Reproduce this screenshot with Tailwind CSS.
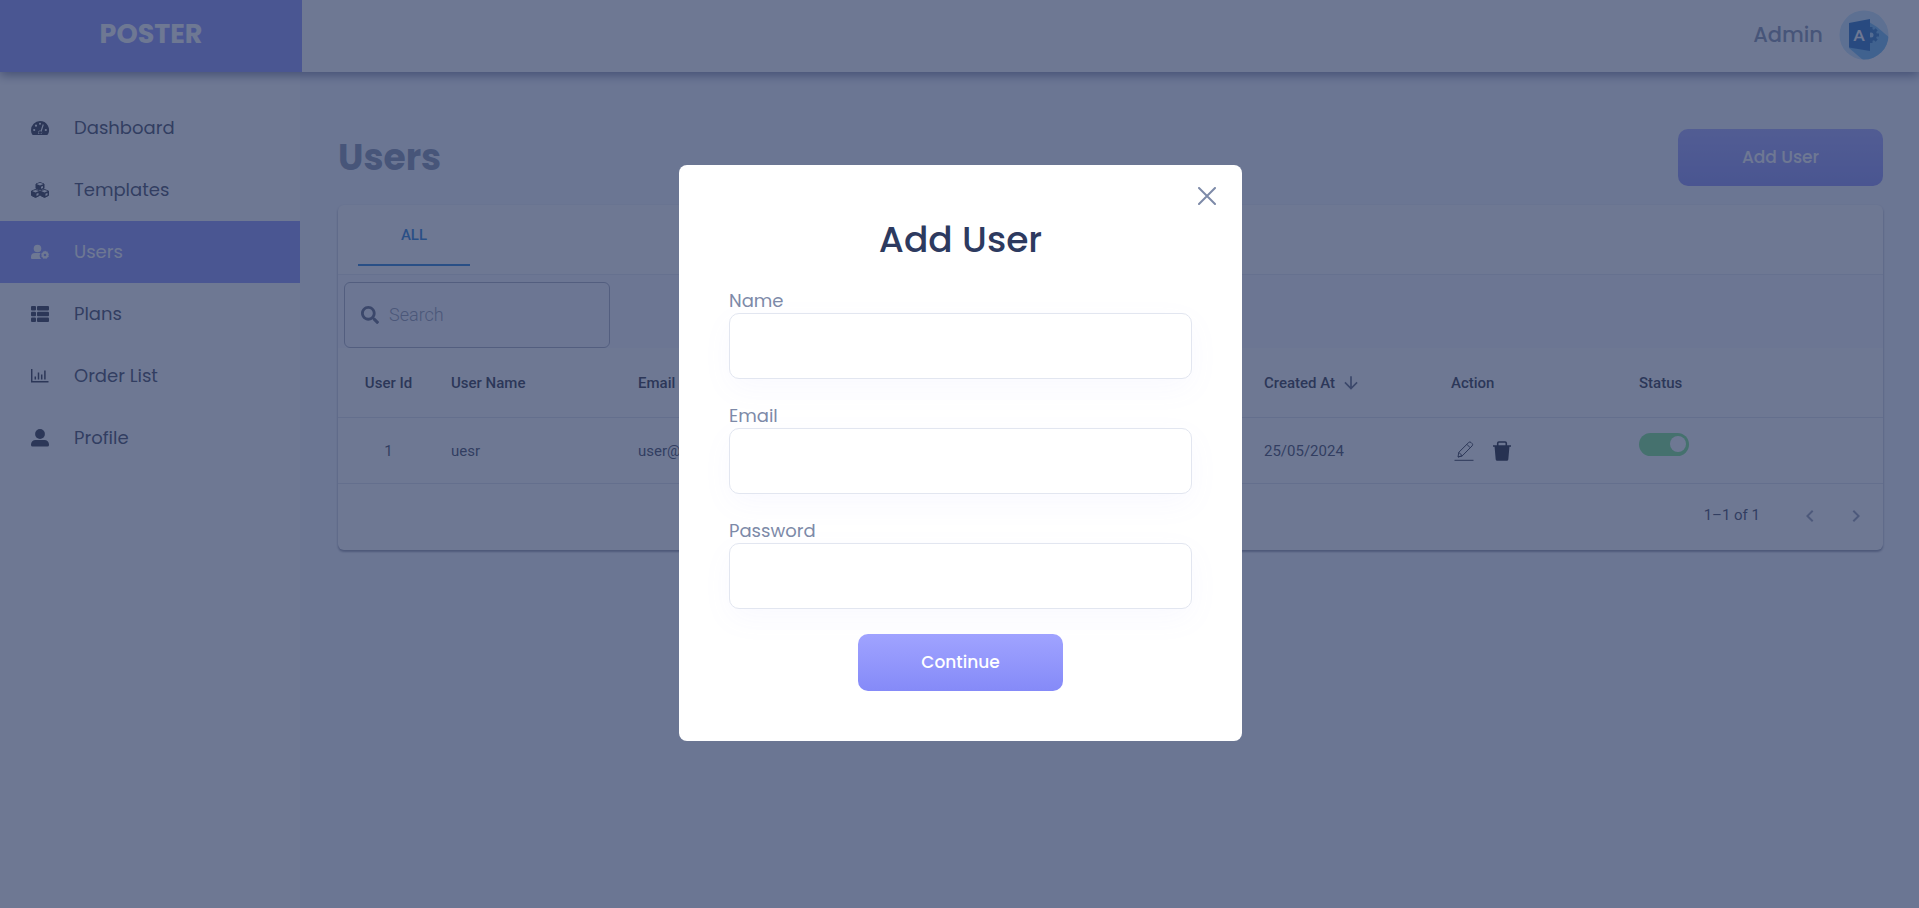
<!DOCTYPE html>
<html lang="en">
<head>
    <meta charset="UTF-8" />
    <meta name="viewport" content="width=device-width, initial-scale=1.0" />
    <title>Poster Admin</title>
    <script src="https://cdn.jsdelivr.net/npm/@tailwindcss/browser@4"></script>
</head>
<body class="min-h-screen bg-[#f5f8ff] font-[Poppins,Inter,sans-serif] text-[#7d8aa8]">
    <div class="flex min-h-screen flex-col">
        <!-- Top bar -->
        <header class="relative flex h-18 bg-white shadow-[0_3px_10px_rgba(20,28,80,0.6)]">
            <div class="flex w-[302px] items-center justify-center bg-[#858cfa] pb-1 text-[27px] font-bold text-white">POSTER</div>
            <div class="flex flex-1 items-center justify-end gap-4 pr-[30px] pb-[2px]">
                <span class="text-[21px] font-medium">Admin</span>
                <svg class="size-[50px]" viewBox="0 0 50 50">
                    <defs><clipPath id="round"><circle cx="25" cy="25" r="24.5" /></clipPath></defs>
                    <g clip-path="url(#round)">
                        <rect width="50" height="50" fill="#c5e4fb" />
                        <path d="M10 38 30 12 38 17 52 29V50H24Z" fill="#64b5f0" />
                        <g fill="#1f6fc0">
                            <circle cx="32" cy="25" r="6" />
                            <path d="M30.500 17h3v16h-3zM24 23.500h16v3H24zM36.600 18.300l2.100 2.100-11.300 11.300-2.100-2.100zM38.700 29.600l-2.100 2.100-11.300-11.300 2.100-2.100z" />
                        </g>
                        <circle cx="32" cy="25" r="2.500" fill="#a9d8fa" />
                        <path d="M10 13 31 9v32L10 37.500Z" fill="#1565c0" />
                        <text x="20" y="31" text-anchor="middle" font-family="Lato, sans-serif" font-size="16" font-weight="700" fill="#fff">A</text>
                    </g>
                </svg>
            </div>
        </header>

        <div class="flex flex-1">
            <!-- Sidebar -->
            <aside class="w-[300px] shrink-0 bg-white pt-[25px] text-lg text-[#363c58]">
                <nav>
                    <a href="#" class="flex h-[62px] items-center gap-[25px] pl-[31px]">
                        <svg class="size-[18px]" viewBox="0 0 18 18">
                            <path d="M9 2a9 9 0 0 0-9 9c0 1.700.4 3.200 1.200 4.500.2.300.5.500.9.500h13.800c.4 0 .7-.2.9-.5A9 9 0 0 0 9 2z" fill="#22263a" />
                            <g fill="#fff"><circle cx="3.200" cy="11" r="1.100" /><circle cx="5" cy="6.700" r="1.100" /><circle cx="9" cy="4.700" r="1" /><circle cx="14.800" cy="11" r="1.100" /><path d="M11.700 5.300l1.100.4-2.100 6.500a2.100 2.100 0 0 1-.1 2.800H7.400a2.100 2.100 0 0 1 2.200-3.300z" /></g>
                            <path d="M9.300 12.300a1.200 1.200 0 0 0-1.100 2.400h1.900a1.200 1.200 0 0 0-.8-2.400z" fill="#22263a" />
                        </svg>
                        Dashboard
                    </a>
                    <a href="#" class="flex h-[62px] items-center gap-[25px] pl-[31px]">
                        <svg class="size-[18px]" viewBox="0 0 18 18" fill="#22263a" stroke="#22263a" stroke-linejoin="round">
                            <path d="M9 1.500 13 3v4.500L9 9 5 7.500V3zM4.500 8.500l4 1.500v4.500l-4 2-4-2V10zM13.500 8.500l4 1.500v4.500l-4 2-4-2V10z" />
                            <path d="M9 1.800 12.500 3 9 4.400 5.500 3zM4.500 9l3.400 1-3.400 1.400-3.400-1.400zM13.500 9l3.400 1-3.400 1.400-3.400-1.400zM10 5.700l2-.8v2l-2 .8zM5.500 12.700l2-.8v2l-2 1zM14.500 12.700l2-.8v2l-2 1z" fill="#fff" stroke="none" />
                        </svg>
                        Templates
                    </a>
                    <a href="#" class="flex h-[62px] items-center gap-[25px] bg-[#858cfa] pl-[31px] text-white">
                        <svg class="size-[18px]" viewBox="0 0 18 18" fill="#fff">
                            <circle cx="6.500" cy="5.500" r="3.800" />
                            <path d="M4 10h5.500a5 5 0 0 0 .6 6H1a1 1 0 0 1-1-1v-1a4 4 0 0 1 4-4z" />
                            <path d="M14 7.500l1 1.100 1.500-.2.400 1.500 1.100 1-.6 1.400.4 1.500-1.400.7-.8 1.300-1.600-.2-1.600.2-.7-1.300-1.300-.8.200-1.500-.4-1.500 1.300-.9.500-1.400 1.400.2z" />
                            <circle cx="14" cy="12" r="1.300" fill="#858cfa" />
                        </svg>
                        Users
                    </a>
                    <a href="#" class="flex h-[62px] items-center gap-[25px] pl-[31px]">
                        <svg class="size-[18px]" viewBox="0 0 18 18" fill="#22263a">
                            <rect x="0" y="1" width="5" height="4.500" rx="1" /><rect x="6" y="1" width="12" height="4.500" rx="1" />
                            <rect x="0" y="6.700" width="5" height="4.500" rx="1" /><rect x="6" y="6.700" width="12" height="4.500" rx="1" />
                            <rect x="0" y="12.400" width="5" height="4.500" rx="1" /><rect x="6" y="12.400" width="12" height="4.500" rx="1" />
                        </svg>
                        Plans
                    </a>
                    <a href="#" class="flex h-[62px] items-center gap-[25px] pl-[31px]">
                        <svg class="size-[18px]" viewBox="0 0 18 18" fill="none" stroke="#22263a" stroke-width="1.500">
                            <path d="M.7 2v12.700H17.500M4.300 12.500V9.500M7.500 12.500V5.500M10.700 12.500V7.500M13.900 12.500V3.500" />
                        </svg>
                        Order List
                    </a>
                    <a href="#" class="flex h-[62px] items-center gap-[25px] pl-[31px]">
                        <svg class="size-[18px]" viewBox="0 0 18 18" fill="#22263a">
                            <circle cx="9" cy="5" r="4.900" />
                            <path d="M4.500 11h9a4.500 4.500 0 0 1 4.500 4.500V16a1.500 1.500 0 0 1-1.500 1.500h-15A1.500 1.500 0 0 1 0 16v-.5A4.500 4.500 0 0 1 4.500 11z" />
                        </svg>
                        Profile
                    </a>
                </nav>
            </aside>

            <!-- Users list -->
            <main class="min-w-0 flex-1 pt-[57px] pr-9 pl-[38px]">
                <div class="flex items-center justify-between">
                    <h1 class="text-4xl font-bold">Users</h1>
                    <button type="button" class="h-[57px] w-[205px] rounded-[10px] bg-linear-to-b from-[#a0a3ff] to-[#858af8] text-[17px] font-medium text-white">Add User</button>
                </div>

                <div class="mt-[19px] rounded-md bg-white font-[Roboto,sans-serif] shadow-[0_2px_2px_rgba(20,25,60,0.35),0_1px_3px_rgba(20,25,60,0.2)]">
                    <div class="flex h-[70px] items-start border-b border-[#e4e7f2] pl-5">
                        <button type="button" class="h-[61px] w-28 border-b-2 border-[#1976d2] pt-[2px] text-[15px] font-medium text-[#1976d2]">ALL</button>
                    </div>
                    <div class="bg-[#f8f9ff] pt-[7px] pl-[6px]">
                        <label class="flex h-[66px] w-[266px] items-center gap-[10px] rounded-md border border-[#a3a8bd] pl-4">
                            <svg class="size-[18px] shrink-0" viewBox="0 0 512 512" fill="#565d78"><path d="M505 442.700L405.300 343c-4.500-4.500-10.600-7-17-7H372c27.600-35.300 44-79.700 44-128C416 93.100 322.900 0 208 0S0 93.100 0 208s93.100 208 208 208c48.300 0 92.700-16.400 128-44v16.300c0 6.400 2.500 12.500 7 17l99.700 99.700c9.400 9.400 24.600 9.400 33.900 0l28.300-28.300c9.400-9.400 9.400-24.600.1-34zM208 336c-70.700 0-128-57.200-128-128 0-70.700 57.200-128 128-128 70.700 0 128 57.200 128 128 0 70.700-57.200 128-128 128z" /></svg>
                            <input type="search" aria-label="Search" placeholder="Search" class="w-full min-w-0 bg-transparent text-lg font-light text-[#363c58] outline-none placeholder:text-[#8a90a8]" />
                        </label>
                    </div>
                    <table class="w-full table-fixed text-left text-[15px] text-[#363c58]">
                        <colgroup>
                            <col class="w-[101px]" />
                            <col class="w-[187px]" />
                            <col class="w-[188px]" />
                            <col />
                            <col class="w-[187px]" />
                            <col class="w-[188px]" />
                            <col class="w-[256px]" />
                        </colgroup>
                        <thead>
                            <tr class="h-[69px] border-b border-[#dde0ec] text-[#22263a]">
                                <th class="pt-[2px] text-center font-medium">User Id</th>
                                <th class="pt-[2px] pl-3 font-medium">User Name</th>
                                <th class="pt-[2px] pl-3 font-medium">Email</th>
                                <td></td>
                                <th class="pt-[2px] pl-3 font-medium">
                                    <div class="flex items-center gap-[6px]">
                                        Created At
                                        <svg class="size-5" viewBox="0 0 24 24" fill="#565d78"><path d="M20 12l-1.410-1.410L13 16.170V4h-2v12.170l-5.580-5.590L4 12l8 8 8-8z" /></svg>
                                    </div>
                                </th>
                                <th class="pt-[2px] pl-3 font-medium">Action</th>
                                <th class="pt-[2px] pl-3 font-medium">Status</th>
                            </tr>
                        </thead>
                        <tbody>
                            <tr class="h-[66px] border-b border-[#dde0ec]">
                                <td class="pt-[2px] text-center">1</td>
                                <td class="pt-[2px] pl-3">uesr</td>
                                <td class="pt-[2px] pl-3">user@</td>
                                <td></td>
                                <td class="pt-[2px] pl-3">25/05/2024</td>
                                <td class="pt-[2px] pl-[15px]">
                                    <div class="flex items-center gap-[18px]">
                                        <button type="button" aria-label="Edit">
                                            <svg class="size-5" viewBox="0 0 20 20" fill="none" stroke="#22263a" stroke-linejoin="round">
                                                <path d="M.5 19.300h19M4 16l.8-4.700L14.700 1.500a1.700 1.700 0 0 1 2.400 0l1 1a1.700 1.700 0 0 1 0 2.400L8.300 14.800zM4.800 11.300l3.500 3.500M12.800 3.300l3.500 3.500M4 16l4.300-1.200" />
                                            </svg>
                                        </button>
                                        <button type="button" aria-label="Delete">
                                            <svg class="size-5" viewBox="0 0 20 20">
                                                <path d="M2.500 5h15l-1.200 13.500a1.500 1.500 0 0 1-1.500 1.200H5.200a1.500 1.500 0 0 1-1.500-1.200z" fill="#111527" />
                                                <path d="M1 5h18M5.700 5V2.200c0-.7.5-1.200 1.200-1.200h6.200c.7 0 1.200.5 1.200 1.200V5" fill="none" stroke="#111527" stroke-width="1.600" />
                                            </svg>
                                        </button>
                                    </div>
                                </td>
                                <td class="pb-3 pl-3">
                                    <label class="flex h-[23px] w-[50px] items-center rounded-full bg-[#75e683] pl-[31px]">
                                        <input type="checkbox" checked aria-label="Status" class="size-4 appearance-none rounded-full bg-white" />
                                    </label>
                                </td>
                            </tr>
                        </tbody>
                    </table>
                    <div class="flex h-[66px] items-center justify-end pr-[15px] pb-[2px] text-[15px] text-[#363c58]">
                        <span class="mr-[38px]">1–1 of 1</span>
                        <button type="button" aria-label="Previous page" class="mr-[22px]">
                            <svg class="size-6" viewBox="0 0 24 24" fill="#9298b0"><path d="M15.410 7.410L14 6l-6 6 6 6 1.410-1.410L10.830 12z" /></svg>
                        </button>
                        <button type="button" aria-label="Next page">
                            <svg class="size-6" viewBox="0 0 24 24" fill="#9298b0"><path d="M10 6L8.590 7.410 13.170 12l-4.580 4.590L10 18l6-6z" /></svg>
                        </button>
                    </div>
                </div>
            </main>
        </div>
    </div>

    <!-- Add User dialog -->
    <div class="fixed inset-0 flex items-center justify-center bg-[#313e65]/70 pb-[2px] pl-[2px]">
        <div role="dialog" aria-modal="true" aria-labelledby="dialogTitle" class="relative w-[563px] rounded-lg bg-white p-[50px]">
            <button type="button" aria-label="Close" class="absolute top-[22px] right-[26px]">
                <svg class="size-[18px]" viewBox="0 0 18 18" fill="none" stroke="#7d8aa8" stroke-width="2" stroke-linecap="round"><path d="M1 1l16 16M17 1L1 17" /></svg>
            </button>
            <h2 id="dialogTitle" class="mb-6 text-center text-4xl/[50px] font-medium text-[#2d3a5f]">Add User</h2>
            <form>
                <div class="mb-[25px]">
                    <label for="name" class="block text-lg/6">Name</label>
                    <input type="text" id="name" class="block h-[66px] w-full rounded-[10px] border border-[#e2e6f0] bg-white px-4 shadow-[0_10px_30px_rgba(133,140,250,0.05)] outline-none" />
                </div>
                <div class="mb-[25px]">
                    <label for="email" class="block text-lg/6">Email</label>
                    <input type="text" id="email" class="block h-[66px] w-full rounded-[10px] border border-[#e2e6f0] bg-white px-4 shadow-[0_10px_30px_rgba(133,140,250,0.05)] outline-none" />
                </div>
                <div class="mb-[25px]">
                    <label for="password" class="block text-lg/6">Password</label>
                    <input type="password" id="password" class="block h-[66px] w-full rounded-[10px] border border-[#e2e6f0] bg-white px-4 shadow-[0_10px_30px_rgba(133,140,250,0.05)] outline-none" />
                </div>
                <button type="button" class="mx-auto block h-[57px] w-[205px] rounded-[10px] bg-linear-to-b from-[#a0a3ff] to-[#858af8] text-[17px] font-medium text-white">Continue</button>
            </form>
        </div>
    </div>
</body>
</html>
